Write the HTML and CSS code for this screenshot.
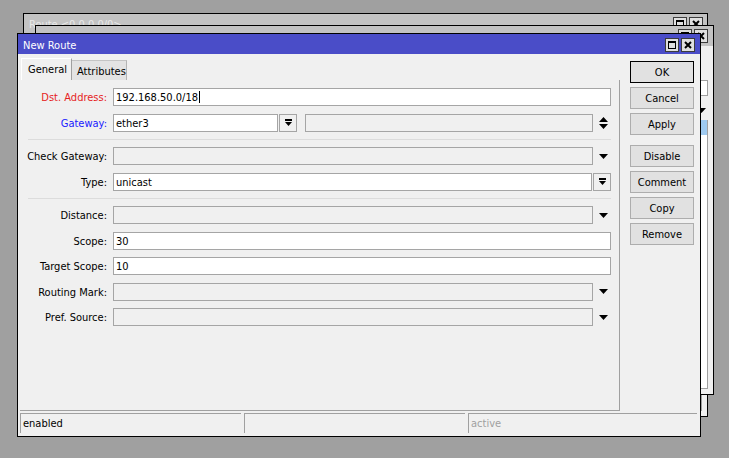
FILE: index.html
```html
<!DOCTYPE html>
<html lang="en">
<head>
    <meta charset="utf-8">
    <link rel="stylesheet" href="styles.css">
    <title>New Route</title>
</head>
<body>
    <div class="win win-1">
        <div class="titlebar grey">
            <span class="title">Route &lt;0.0.0.0/0&gt;</span>
            <span class="tbtns">
                <svg class="tbtn" viewBox="0 0 14 14"><rect x="0.5" y="0.5" width="13" height="13" fill="#e0e0e0" stroke="#3c3c3c"/><rect x="3.5" y="3.5" width="7" height="7" fill="none" stroke="#000"/><rect x="3" y="3" width="8" height="2"/></svg>
                <svg class="tbtn" viewBox="0 0 14 14"><rect x="0.5" y="0.5" width="13" height="13" fill="#e0e0e0" stroke="#3c3c3c"/><path d="M4 4L10 10M10 4L4 10" stroke="#000" stroke-width="2"/></svg>
            </span>
        </div>
        <div class="bgbody">
            <div class="bglist"></div>
        </div>
    </div>

    <div class="win win-2">
        <div class="titlebar grey">
            <span class="title"></span>
            <span class="tbtns">
                <svg class="tbtn" viewBox="0 0 14 14"><rect x="0.5" y="0.5" width="13" height="13" fill="#e0e0e0" stroke="#3c3c3c"/><rect x="3.5" y="3.5" width="7" height="7" fill="none" stroke="#000"/><rect x="3" y="3" width="8" height="2"/></svg>
                <svg class="tbtn" viewBox="0 0 14 14"><rect x="0.5" y="0.5" width="13" height="13" fill="#e0e0e0" stroke="#3c3c3c"/><path d="M4 4L10 10M10 4L4 10" stroke="#000" stroke-width="2"/></svg>
            </span>
        </div>
        <div class="bgbody">
            <div class="bgfind"></div>
            <div class="bghead"><svg width="9" height="5"><path d="M0 0h9L4.5 5z"/></svg></div>
            <div class="bglist"><div class="bgsel"></div></div>
        </div>
    </div>

    <div class="win win-front">
        <div class="titlebar blue">
            <span class="title">New Route</span>
            <span class="tbtns">
                <svg class="tbtn" viewBox="0 0 14 14"><rect x="0.5" y="0.5" width="13" height="13" fill="#e0e0e0" stroke="#3c3c3c"/><rect x="3.5" y="3.5" width="7" height="7" fill="none" stroke="#000"/><rect x="3" y="3" width="8" height="2"/></svg>
                <svg class="tbtn" viewBox="0 0 14 14"><rect x="0.5" y="0.5" width="13" height="13" fill="#e0e0e0" stroke="#3c3c3c"/><path d="M4 4L10 10M10 4L4 10" stroke="#000" stroke-width="2"/></svg>
            </span>
        </div>
        <div class="fbody">
            <div class="main">
                <div class="left">
                    <div class="tabs">
                        <div class="tab active">General</div>
                        <div class="tab">Attributes</div>
                    </div>
                    <div class="panel">
                        <div class="row">
                            <label class="lbl red">Dst. Address:</label>
                            <div class="inp">192.168.50.0/18<span class="caret"></span></div>
                        </div>
                        <div class="row">
                            <label class="lbl blue-t">Gateway:</label>
                            <div class="inp gw">ether3</div>
                            <div class="ddbtn"><svg width="7" height="7"><rect width="7" height="2"/><path d="M0 3h7L3.5 7z"/></svg></div>
                            <div class="inp dis gw2"></div>
                            <div class="slot"><svg width="9" height="12"><path d="M4.5 0L9 5H0z M0 7h9L4.5 12z"/></svg></div>
                        </div>
                        <div class="sep"></div>
                        <div class="row">
                            <label class="lbl">Check Gateway:</label>
                            <div class="inp dis"></div>
                            <div class="slot"><svg width="9" height="5"><path d="M0 0h9L4.5 5z"/></svg></div>
                        </div>
                        <div class="row">
                            <label class="lbl">Type:</label>
                            <div class="inp">unicast</div>
                            <div class="ddbtn"><svg width="7" height="7"><rect width="7" height="2"/><path d="M0 3h7L3.5 7z"/></svg></div>
                        </div>
                        <div class="sep"></div>
                        <div class="row">
                            <label class="lbl">Distance:</label>
                            <div class="inp dis"></div>
                            <div class="slot"><svg width="9" height="5"><path d="M0 0h9L4.5 5z"/></svg></div>
                        </div>
                        <div class="row">
                            <label class="lbl">Scope:</label>
                            <div class="inp">30</div>
                        </div>
                        <div class="row">
                            <label class="lbl">Target Scope:</label>
                            <div class="inp">10</div>
                        </div>
                        <div class="row">
                            <label class="lbl">Routing Mark:</label>
                            <div class="inp dis"></div>
                            <div class="slot"><svg width="9" height="5"><path d="M0 0h9L4.5 5z"/></svg></div>
                        </div>
                        <div class="row">
                            <label class="lbl">Pref. Source:</label>
                            <div class="inp dis"></div>
                            <div class="slot"><svg width="9" height="5"><path d="M0 0h9L4.5 5z"/></svg></div>
                        </div>
                    </div>
                </div>
                <div class="buttons">
                    <div class="btn def">OK</div>
                    <div class="btn">Cancel</div>
                    <div class="btn">Apply</div>
                    <div class="btn spaced">Disable</div>
                    <div class="btn">Comment</div>
                    <div class="btn">Copy</div>
                    <div class="btn">Remove</div>
                </div>
            </div>
            <div class="status">
                <div class="pane">enabled</div>
                <div class="pane"></div>
                <div class="pane muted">active</div>
            </div>
        </div>
    </div>
</body>
</html>
```

FILE: styles.css
```css
* { margin: 0; padding: 0; box-sizing: border-box; }
html, body { width: 729px; height: 458px; overflow: hidden; }
body { background: #a0a0a0; position: relative; font-family: "DejaVu Sans Condensed", "Liberation Sans", sans-serif; font-size: 11px; color: #000; }

/* windows on the desktop */
.win { position: absolute; border: 1px solid #000; background: #f0f0f0; display: flex; flex-direction: column; }
.win-1 { left: 23px; top: 13px; width: 685px; height: 404px; }
.win-2 { left: 35px; top: 25px; width: 679px; height: 370px; }
.win-front { left: 17px; top: 33px; width: 684px; height: 404px; }

.titlebar { height: 20px; flex: none; display: flex; align-items: center; padding: 0 5px; }
.titlebar.grey { background: #c3c3c3; color: #e8e8e8; }
.win-1 .titlebar { padding-right: 4px; }
.titlebar.blue { background: #4a4dc8; color: #fff; padding-top: 2px; }
.title { flex: 1; white-space: nowrap; }
.tbtns { display: flex; gap: 2px; }
.blue .tbtns { margin-top: -1px; }
.tbtn { width: 14px; height: 14px; display: block; }

/* background list windows, only their right edge shows */
.bgbody { flex: 1; display: flex; flex-direction: column; align-items: flex-end; padding: 0 5px 5px 0; }
.bgfind { width: 200px; height: 16px; margin-top: 34px; background: #fff; border: 1px solid #a0a0a0; }
.bghead { width: 300px; height: 20px; margin-top: 4px; display: flex; align-items: center; justify-content: flex-end; padding-right: 2px; }
.bglist { width: 400px; flex: 1; background: #fff; border-right: 1px solid #a0a0a0; border-bottom: 1px solid #a0a0a0; }
.win-1 .bglist { margin-top: 100px; }
.bgsel { height: 15px; background: #9fcaf0; }

/* front dialog */
.fbody { flex: 1; display: flex; flex-direction: column; padding: 4px 0 3px 2px; }
.main { display: flex; height: 353px; }
.left { width: 600px; display: flex; flex-direction: column; }

.tabs { height: 22px; display: flex; align-items: flex-end; padding-left: 1px; }
.tab { width: 55px; height: 20px; background: #e3e3e3; border-top: 1px solid #c4c4c4; border-right: 1px solid #b4b4b4; padding: 4px 0 0 5px; }
.tab.active { width: 51px; height: 22px; background: #f0f0f0; border-top: 1px solid #fff; border-left: 1px solid #fff; border-right: 1px solid #a0a0a0; padding: 4px 0 0 6px; }

.panel { flex: 1; border-right: 1px solid #a0a0a0; border-bottom: 1px solid #a0a0a0; padding: 8px 8px 0 0; }
.row { display: flex; align-items: center; height: 18px; margin-bottom: 7.5px; }
.lbl { width: 87px; flex: none; margin-right: 6px; padding-top: 1px; text-align: right; white-space: nowrap; }
.lbl.red { color: #e61e1e; }
.lbl.blue-t { color: #1a1aff; }
.inp { flex: 1; height: 18px; border: 1px solid #a5a5a5; background: #fff; padding: 1px 0 0 2px; line-height: 16px; white-space: nowrap; }
.inp.dis { background: #f0f0f0; }
.inp.gw { flex: none; width: 165px; }
.inp.gw2 { margin-left: 8px; }
.caret { display: inline-block; width: 1px; height: 12px; background: #000; vertical-align: -2px; margin-left: 1px; }
.ddbtn { width: 18px; height: 18px; flex: none; margin-left: 1px; border: 1px solid #a5a5a5; background: #f0f0f0; display: flex; align-items: center; justify-content: center; }
.slot { width: 18px; flex: none; display: flex; justify-content: center; padding-left: 2px; }
.sep { height: 1px; background: #dcdcdc; margin: 2.5px 0 7px 8px; }

.buttons { width: 64px; margin-left: 10px; padding-top: 3px; display: flex; flex-direction: column; gap: 4px; }
.btn { height: 22px; border: 1px solid #adadad; background: #e1e1e1; display: flex; align-items: center; justify-content: center; padding-top: 1px; }
.btn.def { border-color: #000; }
.btn.spaced { margin-top: 6px; }

.status { height: 20px; margin-top: 2px; display: flex; gap: 3px; padding-right: 3px; }
.pane { width: 221px; border-top: 1px solid #a0a0a0; border-left: 1px solid #a0a0a0; padding-left: 2px; line-height: 19px; }
.pane:last-child { flex: 1; }
.pane.muted { color: #a0a0a0; }
```
